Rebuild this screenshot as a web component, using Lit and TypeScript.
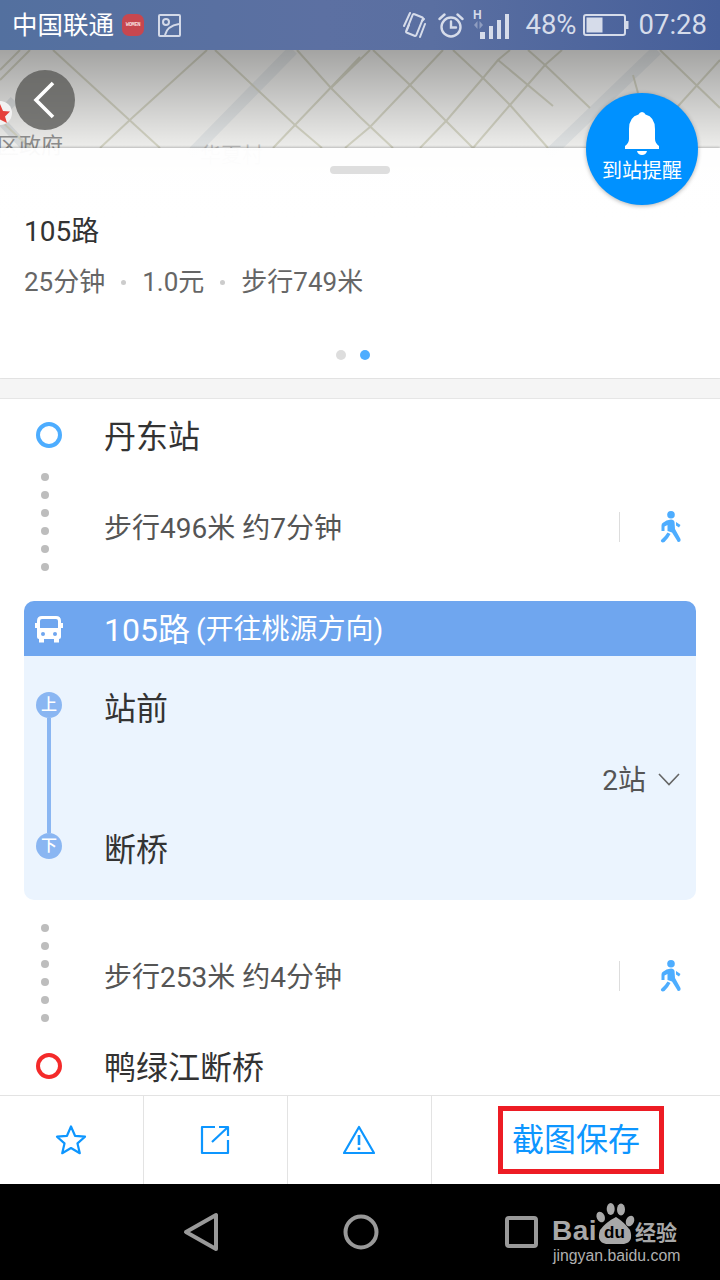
import { LitElement, html, css, svg } from "lit";
import { customElement } from "lit/decorators.js";

const walker = html`<svg class="walker" viewBox="0 0 22 32" width="22" height="32" fill="currentColor">
  <circle cx="11" cy="3.8" r="3.8"/>
  <path d="M6.5 9.5 L11 8.5 Q14 8.5 14.5 11 L15 18 L20.5 28 Q21 31 18.5 31 Q17.5 31 17 29.5 L12 21.5 L7.5 20 L7.5 14 L4.5 15.5 L4.5 20 L1.5 20 L1.5 14.5 Q1.5 12.5 3 11.8 Z"/>
  <path d="M7.5 21.5 L10.5 23 L8 27 L4.5 31 Q2.5 32 1 30.5 Q0.5 29.5 1.5 28.5 L5 25 Z"/>
  <path d="M16 11 L20.5 14 L19 16.5 L16 14.5 Z"/>
</svg>`;

const dots = html`<div class="dots">${[0, 1, 2, 3, 4, 5].map(() => html`<i></i>`)}</div>`;

const mapLines: [number, number][][] = [
  [[53, 50], [160, 148]],
  [[207, 50], [132, 118], [100, 148]],
  [[215, 50], [295, 125], [322, 148]],
  [[360, 57], [295, 125], [273, 148]],
  [[297, 50], [331, 88], [360, 117], [393, 148]],
  [[331, 88], [370, 50]],
  [[373, 50], [410, 85], [445, 120], [473, 148]],
  [[443, 50], [410, 85], [370, 127], [345, 148]],
  [[453, 50], [483, 78], [510, 105], [548, 148]],
  [[562, 50], [545, 65], [510, 105], [473, 148]],
  [[510, 50], [498, 60], [483, 78], [447, 120], [420, 148]],
  [[498, 60], [553, 106]],
  [[528, 50], [545, 65], [590, 108]],
  [[633, 75], [638, 93]],
  [[0, 80], [30, 50]],
  [[20, 50], [0, 70]],
  [[0, 120], [30, 148]],
  [[640, 148], [720, 60]],
  [[660, 50], [720, 108]],
];

@customElement("app-root")
export class AppRoot extends LitElement {
  static styles = css`
    :host {
      display: flex;
      flex-direction: column;
      width: 720px;
      height: 1280px;
      overflow: hidden;
      position: relative;
      background: #fff;
      font-family: Roboto, "Noto Sans CJK SC", sans-serif;
      color: #333;
    }
    .status {
      height: 50px;
      flex: none;
      display: flex;
      align-items: center;
      padding: 0 13px 0 12px;
      box-sizing: border-box;
      background: linear-gradient(90deg, #53709f 0%, #5c70a2 45%, #5a6fa1 60%, #465f9a 100%);
      color: #d6dcea;
      position: relative;
      z-index: 3;
    }
    .carrier { font-size: 25.5px; color: #fff; line-height: 50px; white-space: nowrap; }
    .badge {
      width: 22px; height: 22px; border-radius: 7px; background: #c7474f; margin-left: 8px;
      color: #f5dada; font: 700 5.5px/22px "Liberation Mono", monospace; text-align: center; overflow: hidden;
      letter-spacing: -0.4px;
    }
    .pic { margin-left: 14px; display: block; }
    .spacer { flex: 1; }
    .s-right { display: flex; align-items: center; height: 50px; }
    .s-text { font-size: 27.5px; line-height: 50px; white-space: nowrap; }
    .s-right svg { display: block; flex: none; }
    .battery { margin: 0 10px 0 6px; }
    .top { position: relative; height: 328px; flex: none; }
    .map { position: absolute; left: 0; top: 0; width: 720px; height: 328px; overflow: hidden; background: #f1f1ef; }
    .map-art { position: absolute; left: 0; top: 0; }
    .shade { position: absolute; left: 0; top: 0; width: 720px; height: 98px; background: linear-gradient(180deg, rgba(0,0,0,.32), rgba(0,0,0,.015)); }
    .label { position: absolute; white-space: nowrap; line-height: 30px; }
    .l1 { left: -3px; top: 81px; font-size: 22px; color: #8a8a8a; }
    .l2 { left: 200px; top: 90px; font-size: 21px; color: #bdbdbd; }
    .marker {
      position: absolute; left: -12px; top: 51px; width: 24px; height: 24px; border-radius: 50%;
      background: #f2f2f2; display: flex; align-items: center; justify-content: center;
    }
    .marker svg { display: block; }
    .back {
      position: absolute; left: 15px; top: 20px; width: 60px; height: 60px; border-radius: 50%;
      background: rgba(88, 88, 86, 0.78); display: flex; align-items: center; justify-content: center;
    }
    .back svg { display: block; margin-left: -3px; }
    .sheet {
      position: relative;
      margin-top: 98px;
      height: 230px;
      box-sizing: border-box;
      background: linear-gradient(180deg, rgba(255,255,255,.95) 0, rgba(255,255,255,.98) 40px, #fff 70px);
      box-shadow: 0 -1px 2px rgba(0,0,0,.22);
      display: flex;
      flex-direction: column;
      align-items: flex-start;
      padding: 18px 24px 0;
    }
    .handle { width: 60px; height: 8px; border-radius: 4px; background: #dedede; align-self: center; }
    .title { font-size: 28px; line-height: 40px; margin-top: 38px; color: #333; }
    .sub { display: flex; align-items: center; font-size: 26px; line-height: 40px; margin-top: 10px; color: #666; white-space: nowrap; }
    .sub i { width: 5px; height: 5px; border-radius: 50%; background: #ccc; margin: 0 16px 0 16px; }
    .pager { align-self: center; display: flex; gap: 14px; margin: 48px 14px 0 0; }
    .pager i { width: 10px; height: 10px; border-radius: 50%; background: #ddd; }
    .pager i.on { background: #4dadff; }
    .fab {
      position: absolute; left: 586px; top: 43px; width: 112px; height: 112px; border-radius: 50%;
      background: #0091ff; box-shadow: 0 1px 4px rgba(0,0,0,.3);
      display: flex; flex-direction: column; align-items: center; color: #fff;
    }
    .fab svg { margin-top: 19px; display: block; }
    .fab span { font-size: 20px; line-height: 28px; margin-top: 1px; white-space: nowrap; }
    .sep { height: 21px; flex: none; box-sizing: border-box; background: #f5f5f5; border-top: 1px solid #e6e6e6; border-bottom: 1px solid #e6e6e6; }
    .route { flex: 1; min-height: 0; overflow: hidden; display: flex; flex-direction: column; }
    .station { height: 74px; flex: none; display: flex; align-items: center; padding-left: 36px; font-size: 32px; color: #333; }
    .station span { display: block; margin-top: -5px; }
    .ring { width: 26px; height: 26px; box-sizing: border-box; border-radius: 50%; border: 4px solid #4dadff; margin: -2px 42px 0 0; flex: none; }
    .ring.end { border-color: #f42a2a; }
    .walk { height: 108px; flex: none; display: flex; align-items: flex-start; padding: 0 24px 0 41px; margin-bottom: 20px; }
    .walk.second { margin-bottom: -2px; }
    .dots { display: flex; flex-direction: column; gap: 10px; width: 8px; flex: none; }
    .dots i { width: 8px; height: 8px; border-radius: 50%; background: #bdbdbd; display: block; }
    .walk-text { font-size: 28px; color: #555; line-height: 112px; margin-left: 55px; flex: 1; white-space: nowrap; }
    .second .walk-text { line-height: 108px; }
    .walk-side { display: flex; align-items: center; height: 108px; color: #4dadff; padding-right: 14px; }
    .second .walk-side { height: 104px; }
    .vline { width: 1px; height: 30px; background: #ddd; margin: 0 40px 0 1px; }
    .walker { display: block; }
    .card { margin: 0 24px 24px; height: 299px; flex: none; border-radius: 10px; overflow: hidden; background: #ebf4fe; }
    .card-head { height: 55px; background: #6fa6ef; color: #fff; display: flex; align-items: center; padding-left: 11px; white-space: nowrap; }
    .card-head b { font-weight: 400; font-size: 32px; margin: -3px 0 0 41px; }
    .card-head span { font-size: 28px; margin: -3px 0 0 6px; }
    .card-body { display: flex; height: 244px; }
    .rail { width: 80px; flex: none; box-sizing: border-box; padding: 36px 0 0 12px; display: flex; flex-direction: column; }
    .rail u { text-decoration: none; width: 26px; height: 26px; border-radius: 50%; background: #8ab6f2; color: #fff; font-size: 16px; font-weight: 500; line-height: 25px; text-align: center; flex: none; }
    .rail em { display: block; width: 4px; height: 115px; background: #8ab6f2; margin-left: 11px; flex: none; }
    .stops { flex: 1; display: flex; flex-direction: column; }
    .stop { font-size: 32px; color: #333; display: flex; align-items: center; }
    .s1 { height: 100px; margin-bottom: 4px; }
    .s2 { height: 98px; margin-bottom: 4px; }
    .count { height: 36px; margin-bottom: 2px; display: flex; align-items: center; justify-content: flex-end; padding-right: 16px; font-size: 28px; color: #555; gap: 12px; }
    .count svg { display: block; margin-top: 2px; }
    .tabs { height: 89px; flex: none; display: flex; box-sizing: border-box; border-top: 1px solid #e3e3e3; background: #fff; }
    .tab { width: 144px; flex: none; box-sizing: border-box; border-right: 1px solid #e3e3e3; display: flex; align-items: center; justify-content: center; }
    .tab svg { display: block; margin-left: -1px; }
    .save { flex: 1; display: flex; align-items: center; padding: 0 0 1px 66px; }
    .save span {
      display: block; box-sizing: border-box; width: 166px; height: 68px; border: 5px solid #ed1c24;
      font-size: 32px; line-height: 58px; padding-left: 9px; color: #0d96ff; white-space: nowrap;
    }
    .nav { height: 96px; flex: none; background: #000; position: relative; }
    .nav-art { position: absolute; left: 0; top: 0; }
    .wm { position: absolute; color: #a8a8a8; white-space: nowrap; }
    .bai { left: 552px; top: 32px; font: 700 28px/30px "Liberation Sans", sans-serif; letter-spacing: 0.5px; }
    .jing { left: 635px; top: 36px; font-size: 21px; line-height: 26px; font-weight: 700; }
    .url { left: 553px; top: 61px; font: 400 15.8px/22px "Liberation Sans", sans-serif; color: #b0b0b0; }
    .du { left: 604px; top: 37px; font: 700 17px/24px "Liberation Sans", sans-serif; color: #000; }
  `;

  render() {
    return html`
      <div class="status">
        <span class="carrier">中国联通</span>
        <div class="badge">WOMEN</div>
        <svg class="pic" width="23" height="23" viewBox="0 0 23 23" fill="none" stroke="#d3d9e8" stroke-width="2">
          <rect x="1" y="1" width="21" height="21" rx="1"/>
          <circle cx="8" cy="8" r="3"/>
          <path d="M7 21 Q9 12 21 10"/>
        </svg>
        <div class="spacer"></div>
        <div class="s-right">
          <svg width="24" height="28" viewBox="0 0 24 28" fill="none" stroke="#d6dcea" stroke-width="2" stroke-linecap="round">
            <rect x="6" y="4" width="11" height="20" rx="1.5" transform="rotate(22 11.5 14)"/>
            <path d="M1 15 L7 2 M4 19 L6 14 M22 13 L17 26 M19 10 L21 8"/>
          </svg>
          <svg style="margin-left:11px" width="26" height="26" viewBox="0 0 26 26" fill="none" stroke="#d6dcea" stroke-width="2.4" stroke-linecap="round">
            <circle cx="13" cy="15" r="9.5"/>
            <path d="M13 9.5 V15.5 H18"/>
            <path d="M1.5 7 L6.5 2.5 M24.5 7 L19.5 2.5"/>
          </svg>
          <svg style="margin-left:9px" width="38" height="36" viewBox="0 0 38 36">
            <text x="0" y="12" font-family="Liberation Sans" font-weight="700" font-size="12" fill="#d6dcea">H</text>
            <path d="M1 18 L4.5 14 V22 Z M10 18 L6.5 14 V22 Z" fill="#8f9dc0"/>
            <rect x="7" y="25" width="5" height="7" fill="#d6dcea"/>
            <rect x="16" y="19" width="4" height="13" fill="#d6dcea"/>
            <rect x="24" y="13" width="4" height="19" fill="#d6dcea"/>
            <rect x="32" y="7" width="4" height="25" fill="#d6dcea"/>
          </svg>
          <span class="s-text" style="margin-left:14px">48%</span>
          <svg class="battery" width="46" height="22" viewBox="0 0 46 22" fill="none">
            <rect x="1" y="1" width="41" height="20" rx="2" stroke="#d6dcea" stroke-width="2"/>
            <rect x="3.5" y="3.5" width="16" height="15" fill="#d6dcea"/>
            <rect x="43" y="7" width="2.5" height="8" fill="#d6dcea"/>
          </svg>
          <span class="s-text">07:28</span>
        </div>
      </div>

      <div class="top">
        <div class="map">
          <svg class="map-art" width="720" height="230" viewBox="0 50 720 230" fill="none">
            <path d="M293 50 L190 155 M657 50 L548 155" stroke="#e2e5e6" stroke-width="11"/>
            <path d="M0 120 L28 150 M0 115 L14 100" stroke="#dcdfe0" stroke-width="9"/>
            ${mapLines.map(
              (l) => svg`<polyline points=${l.map((p) => p.join(",")).join(" ")} stroke="#d4d4c4" stroke-width="2"/>`
            )}
          </svg>
          <div class="shade"></div>
          <span class="label l1">区政府</span>
          <span class="label l2">华夏村</span>
          <div class="marker">
            <svg width="24" height="24" viewBox="0 0 24 24"><path d="M12 3 L15 10 L22 10.5 L17 15.5 L19 22 L12 18.5 L5 22 L7 15.5 L2 10.5 L9 10 Z" fill="#e5403a"/></svg>
          </div>
          <div class="back">
            <svg width="24" height="38" viewBox="0 0 24 38" fill="none"><path d="M21 2 L4 19 L21 36" stroke="#fff" stroke-width="3.6"/></svg>
          </div>
        </div>
        <div class="sheet">
          <div class="handle"></div>
          <div class="title">105路</div>
          <div class="sub">25分钟<i></i>1.0元<i></i>步行749米</div>
          <div class="pager"><i></i><i class="on"></i></div>
        </div>
        <div class="fab">
          <svg width="34" height="44" viewBox="0 0 34 44" fill="#fff">
            <path d="M17 0 Q19.5 0 20.5 2.5 Q30 5 30 17 V27 Q30 31 34 34 V37 H0 V34 Q4 31 4 27 V17 Q4 5 13.5 2.5 Q14.5 0 17 0 Z"/>
            <path d="M12 39 H22 Q21 43 17 43 Q13 43 12 39 Z"/>
          </svg>
          <span>到站提醒</span>
        </div>
      </div>
      <div class="sep"></div>

      <div class="route">
        <div class="station"><div class="ring"></div><span>丹东站</span></div>
        <div class="walk">
          ${dots}
          <div class="walk-text">步行496米 约7分钟</div>
          <div class="walk-side"><div class="vline"></div>${walker}</div>
        </div>
        <div class="card">
          <div class="card-head">
            <svg width="28" height="28" viewBox="0 0 28 28" fill="none">
              <path d="M2 14 V6 Q2 1 7 1 H21 Q26 1 26 6 V14 H23 V6 Q23 4 21 4 H7 Q5 4 5 6 V14 Z" fill="#fff"/>
              <path d="M2 13 H26 V22 Q26 24 24 24 V27.5 H19 V24 H9 V27.5 H4 V24 Q2 24 2 22 Z" fill="#fff"/>
              <path d="M0 8 H2 V13 H0 Z M26 8 H28 V13 H26 Z" fill="#fff"/>
              <circle cx="8" cy="19" r="2" fill="#6fa6ef"/>
              <circle cx="20" cy="19" r="2" fill="#6fa6ef"/>
            </svg>
            <b>105路</b><span>(开往桃源方向)</span>
          </div>
          <div class="card-body">
            <div class="rail"><u>上</u><em></em><u>下</u></div>
            <div class="stops">
              <div class="stop s1">站前</div>
              <div class="count">2站
                <svg width="22" height="13" viewBox="0 0 22 13" fill="none"><path d="M1 1 L11 11.5 L21 1" stroke="#666" stroke-width="1.6"/></svg>
              </div>
              <div class="stop s2">断桥</div>
            </div>
          </div>
        </div>
        <div class="walk second">
          ${dots}
          <div class="walk-text">步行253米 约4分钟</div>
          <div class="walk-side"><div class="vline"></div>${walker}</div>
        </div>
        <div class="station"><div class="ring end"></div><span>鸭绿江断桥</span></div>
      </div>

      <div class="tabs">
        <div class="tab">
          <svg width="32" height="32" viewBox="0 0 32 32" fill="none" stroke="#0d96ff" stroke-width="2.2" stroke-linejoin="round">
            <path d="M16 2.5 L20 11.8 L30 12.7 L22.5 19.4 L24.8 29.2 L16 24 L7.2 29.2 L9.5 19.4 L2 12.7 L12 11.8 Z"/>
          </svg>
        </div>
        <div class="tab">
          <svg width="30" height="30" viewBox="0 0 30 30" fill="none" stroke="#0d96ff" stroke-width="2.2" stroke-linejoin="round">
            <path d="M15 2 H2 V28 H28 V15 M19 2 H28 V11 M28 2 L12 17"/>
          </svg>
        </div>
        <div class="tab">
          <svg width="32" height="30" viewBox="0 0 32 30" fill="none" stroke="#0d96ff" stroke-width="2.2" stroke-linejoin="round">
            <path d="M16 2 L31 28 H1 Z"/>
            <path d="M16 10 V20 M16 22.5 V25" stroke-width="2.6"/>
          </svg>
        </div>
        <div class="save"><span>截图保存</span></div>
      </div>

      <div class="nav">
        <svg class="nav-art" width="720" height="96" viewBox="0 1184 720 96" fill="none" stroke="#999" stroke-width="4" stroke-linejoin="round">
          <path d="M186 1232 L216 1215 V1249 Z"/>
          <circle cx="361" cy="1232" r="15.5"/>
          <rect x="507" y="1218" width="29" height="28" rx="2"/>
          <g fill="#a8a8a8" stroke="none">
            <ellipse cx="600.7" cy="1217" rx="4" ry="5.5" transform="rotate(-25 600.7 1217)"/>
            <ellipse cx="610.7" cy="1209" rx="4" ry="6"/>
            <ellipse cx="621" cy="1209.5" rx="4" ry="6"/>
            <ellipse cx="630" cy="1221" rx="4" ry="5.5" transform="rotate(25 630 1221)"/>
            <path d="M616 1217 Q624 1222 630 1230 Q634 1242 624 1244 H606 Q596 1242 600 1230 Q606 1222 616 1217 Z"/>
          </g>
        </svg>
        <span class="wm bai">Bai</span>
        <span class="wm du">du</span>
        <span class="wm jing">经验</span>
        <span class="wm url">jingyan.baidu.com</span>
      </div>
    `;
  }
}
